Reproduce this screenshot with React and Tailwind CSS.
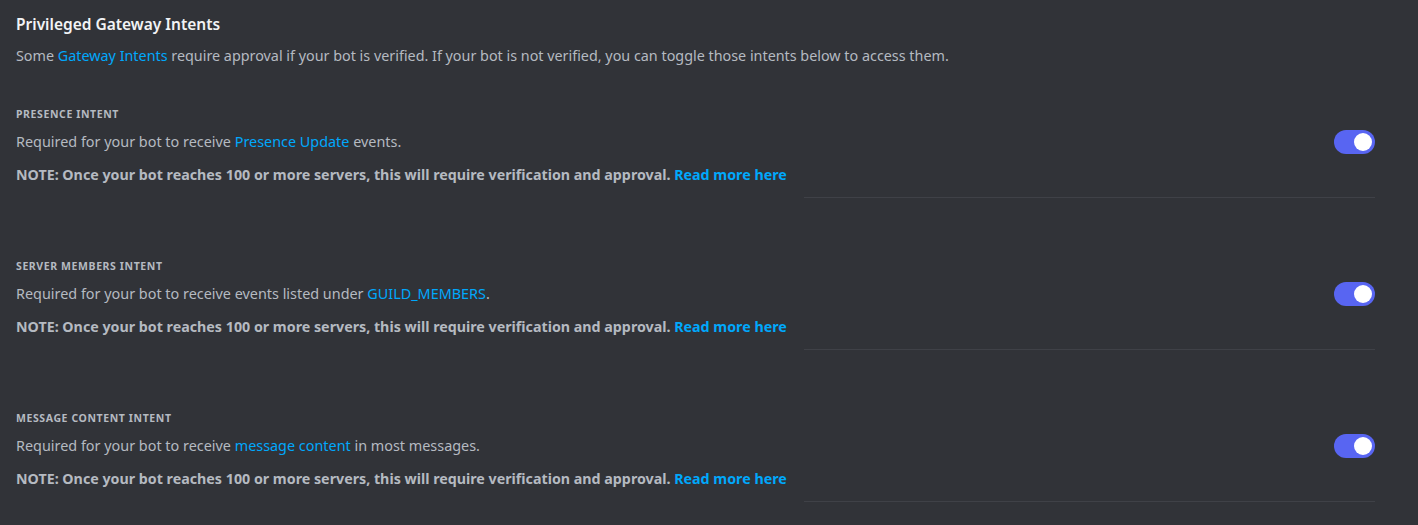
const INTENTS = [
  {
    id: "presence",
    label: "Presence Intent",
    before: "Required for your bot to receive ",
    link: "Presence Update",
    after: " events.",
  },
  {
    id: "members",
    label: "Server Members Intent",
    before: "Required for your bot to receive events listed under ",
    link: "GUILD_MEMBERS",
    after: ".",
  },
  {
    id: "content",
    label: "Message Content Intent",
    before: "Required for your bot to receive ",
    link: "message content",
    after: " in most messages.",
  },
];

function Toggle() {
  return (
    <div className="w-[41px] h-[24px] -my-[2px] rounded-full bg-[#5865f2] flex items-center justify-end pr-[3px] shrink-0">
      <div className="w-[18px] h-[18px] rounded-full bg-white" />
    </div>
  );
}

export default function App() {
  return (
    <div
      className="min-h-screen bg-[#313338] pl-4 pr-[43px] pt-[12px]"
      style={{ fontFamily: '"Noto Sans", "Open Sans", sans-serif' }}
    >
      <h2 className="text-[15.5px] leading-[24px] font-semibold text-[#f2f3f5]">
        Privileged Gateway Intents
      </h2>
      <p className="mt-[10px] text-[14.35px] leading-[20px] text-[#b5bac1]">
        Some <span className="text-[#00a8fc]">Gateway Intents</span> require approval if your bot is
        verified. If your bot is not verified, you can toggle those intents below to access them.
      </p>

      {INTENTS.map((intent, i) => (
        <div key={intent.id} className={i === 0 ? "mt-[40px]" : "mt-[60px]"}>
          <h3 className="text-[10.5px] leading-[16px] tracking-[0.6px] font-bold uppercase text-[#b5bac1]">
            {intent.label}
          </h3>
          <div className="mt-[10px] h-[20px] flex items-center justify-between">
            <p className="text-[14.4px] leading-[20px] text-[#b5bac1]">
              {intent.before}
              <span className="text-[#00a8fc]">{intent.link}</span>
              {intent.after}
            </p>
            <Toggle />
          </div>
          <p className="mt-[13px] text-[14.25px] leading-[20px] font-bold text-[#b5bac1]">
            NOTE: Once your bot reaches 100 or more servers, this will require verification and
            approval. <span className="text-[#00a8fc]">Read more here</span>
          </p>
          <div className="mt-[12px] ml-auto w-[571px] h-px bg-[#3f4147]" />
        </div>
      ))}
    </div>
  );
}
